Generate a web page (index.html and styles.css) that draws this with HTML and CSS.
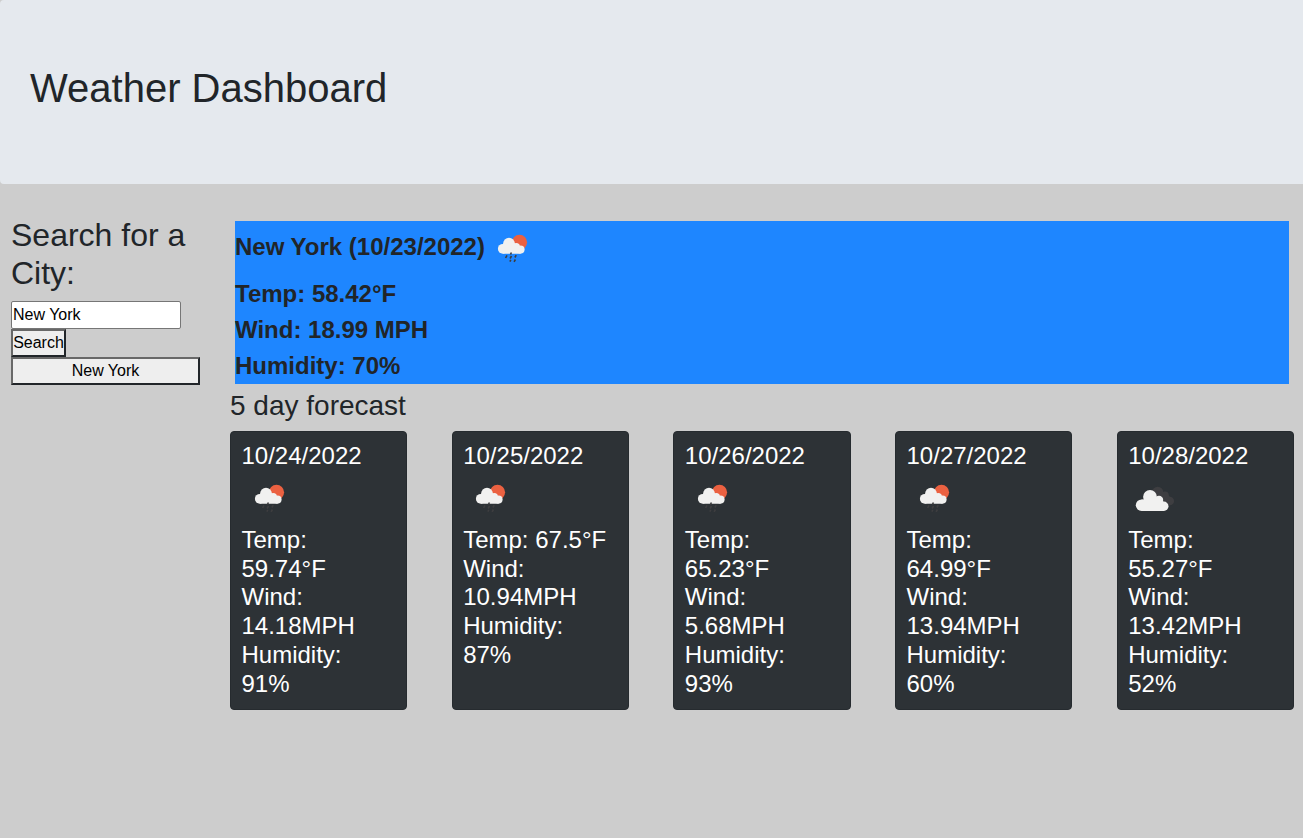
FILE: index.html
```html
<!DOCTYPE html>
<html lang="en">
<head>
<meta charset="utf-8">
<title>Weather Dashboard</title>
<link rel="stylesheet" href="styles.css">
</head>
<body>
<svg class="sprite" width="0" height="0" aria-hidden="true">
  <symbol id="rain" viewBox="0 0 50 50">
    <circle cx="34.5" cy="22.3" r="7.6" fill="#eb6141"/>
    <g fill="#f1f1f0">
      <circle cx="17.8" cy="28.8" r="4.9"/>
      <circle cx="24" cy="23.6" r="5.9"/>
      <circle cx="31.2" cy="26.6" r="3.7"/>
      <circle cx="35.5" cy="29.6" r="4.1"/>
      <path d="M18 24h13l4.5 4v5.7H17.8z"/>
    </g>
    <path d="M26.4 32.5l-.9 2M22 35.3l-1.4 2.7M26.5 36l-1.4 2.5M31.2 35.2l-1.3 2.3M25.8 39.8l-.9 1.8M30.4 39.5l-1.3 2.3" stroke="#3e3e40" stroke-width="1.6" fill="none"/>
  </symbol>
  <symbol id="clouds" viewBox="0 0 50 50">
    <g fill="#3e3e41">
      <circle cx="29.7" cy="22.2" r="5.5"/>
      <circle cx="37" cy="25.2" r="3.8"/>
      <circle cx="41.8" cy="31" r="4.3"/>
      <path d="M30 22l7 0 5 5v8.3h-5z"/>
    </g>
    <g fill="#f1f1f0">
      <circle cx="13.6" cy="35.2" r="5.8"/>
      <circle cx="22" cy="26.9" r="6.9"/>
      <circle cx="31" cy="29.9" r="4.2"/>
      <circle cx="35.8" cy="36.3" r="4.7"/>
      <path d="M13.6 29.5h20l2.5 3V41H13.6z"/>
    </g>
  </symbol>
</svg>
<header class="jumbotron"><h1>Weather Dashboard</h1></header>
<div class="layout">
  <aside class="search">
    <h2>Search for a City:</h2>
    <input class="city" type="text" value="New York">
    <button class="submit">Search</button>
    <button class="history">New York</button>
  </aside>
  <main class="results">
    <section class="today">
      <div class="place"><span>New York (10/23/2022)</span><svg class="icon"><use href="#rain"/></svg></div>
      <p>Temp: 58.42°F</p>
      <p>Wind: 18.99 MPH</p>
      <p>Humidity: 70%</p>
    </section>
    <h3>5 day forecast</h3>
    <section class="cards">
      <article class="card"><p>10/24/2022</p><svg class="icon"><use href="#rain"/></svg><p>Temp: 59.74°F</p><p>Wind: 14.18MPH</p><p>Humidity: 91%</p></article>
      <article class="card"><p>10/25/2022</p><svg class="icon"><use href="#rain"/></svg><p>Temp: 67.5°F</p><p>Wind: 10.94MPH</p><p>Humidity: 87%</p></article>
      <article class="card"><p>10/26/2022</p><svg class="icon"><use href="#rain"/></svg><p>Temp: 65.23°F</p><p>Wind: 5.68MPH</p><p>Humidity: 93%</p></article>
      <article class="card"><p>10/27/2022</p><svg class="icon"><use href="#rain"/></svg><p>Temp: 64.99°F</p><p>Wind: 13.94MPH</p><p>Humidity: 60%</p></article>
      <article class="card"><p>10/28/2022</p><svg class="icon"><use href="#clouds"/></svg><p>Temp: 55.27°F</p><p>Wind: 13.42MPH</p><p>Humidity: 52%</p></article>
    </section>
  </main>
</div>
</body>
</html>
```
FILE: styles.css
```css
* { box-sizing: border-box; }
body {
  margin: 0;
  background: #cdcdcd;
  color: #212529;
  font-family: "Liberation Sans", Arial, sans-serif;
  font-size: 16px;
  line-height: 1.5;
}
h1, h2, h3, p { margin: 0; font-weight: 400; }
h1, h2, h3 { line-height: 1.2; }
.sprite { display: block; }
.jumbotron {
  height: 184px;
  padding: 64px 30px;
  background: #e5e9ee;
  border-radius: 4px 0 0 4px;
}
h1 { font-size: 40px; }
.layout { display: flex; padding: 32px 9px 0 11px; }
.search {
  display: flex;
  flex-direction: column;
  align-items: flex-start;
  width: 189px;
  margin-right: 30px;
}
h2 { height: 77px; margin-bottom: 8px; font-size: 32px; }
.city, .submit, .history {
  height: 28px;
  margin: 0;
  color: #000;
  font: 16px/24px "Liberation Sans", Arial, sans-serif;
}
.city {
  width: 170px;
  padding: 1px;
  border: 1px solid #767676;
  border-radius: 2px;
  background: #fff;
}
.submit, .history {
  padding: 0;
  border: 2px solid;
  border-color: #686868 #212529 #212529 #686868;
  background: #eee;
  white-space: nowrap;
}
.submit { width: 55px; }
.history { width: 189px; }
.results { flex: 1; min-width: 0; }
.today {
  margin: 5px 5px 0;
  background: #1e86ff;
  font-size: 24px;
}
.today span, .today p { font-weight: 700; }
.place { display: flex; height: 55px; }
.place span { padding-top: 8px; }
.place .icon { margin-top: -1px; }
.icon { display: block; width: 50px; height: 50px; flex: none; }
h3 { height: 34px; margin: 5px 0 8px; font-size: 28px; }
.cards {
  display: grid;
  grid-template-columns: repeat(5, 177.3px);
  justify-content: space-between;
}
.card {
  height: 279px;
  padding: 10px 10.5px;
  border: 1px solid #262b2f;
  border-radius: 4px;
  background: #2d3236;
  color: #fff;
  font-size: 24px;
  line-height: 28.8px;
}
.card .icon { margin: -0.8px 0 5.9px; }
```
